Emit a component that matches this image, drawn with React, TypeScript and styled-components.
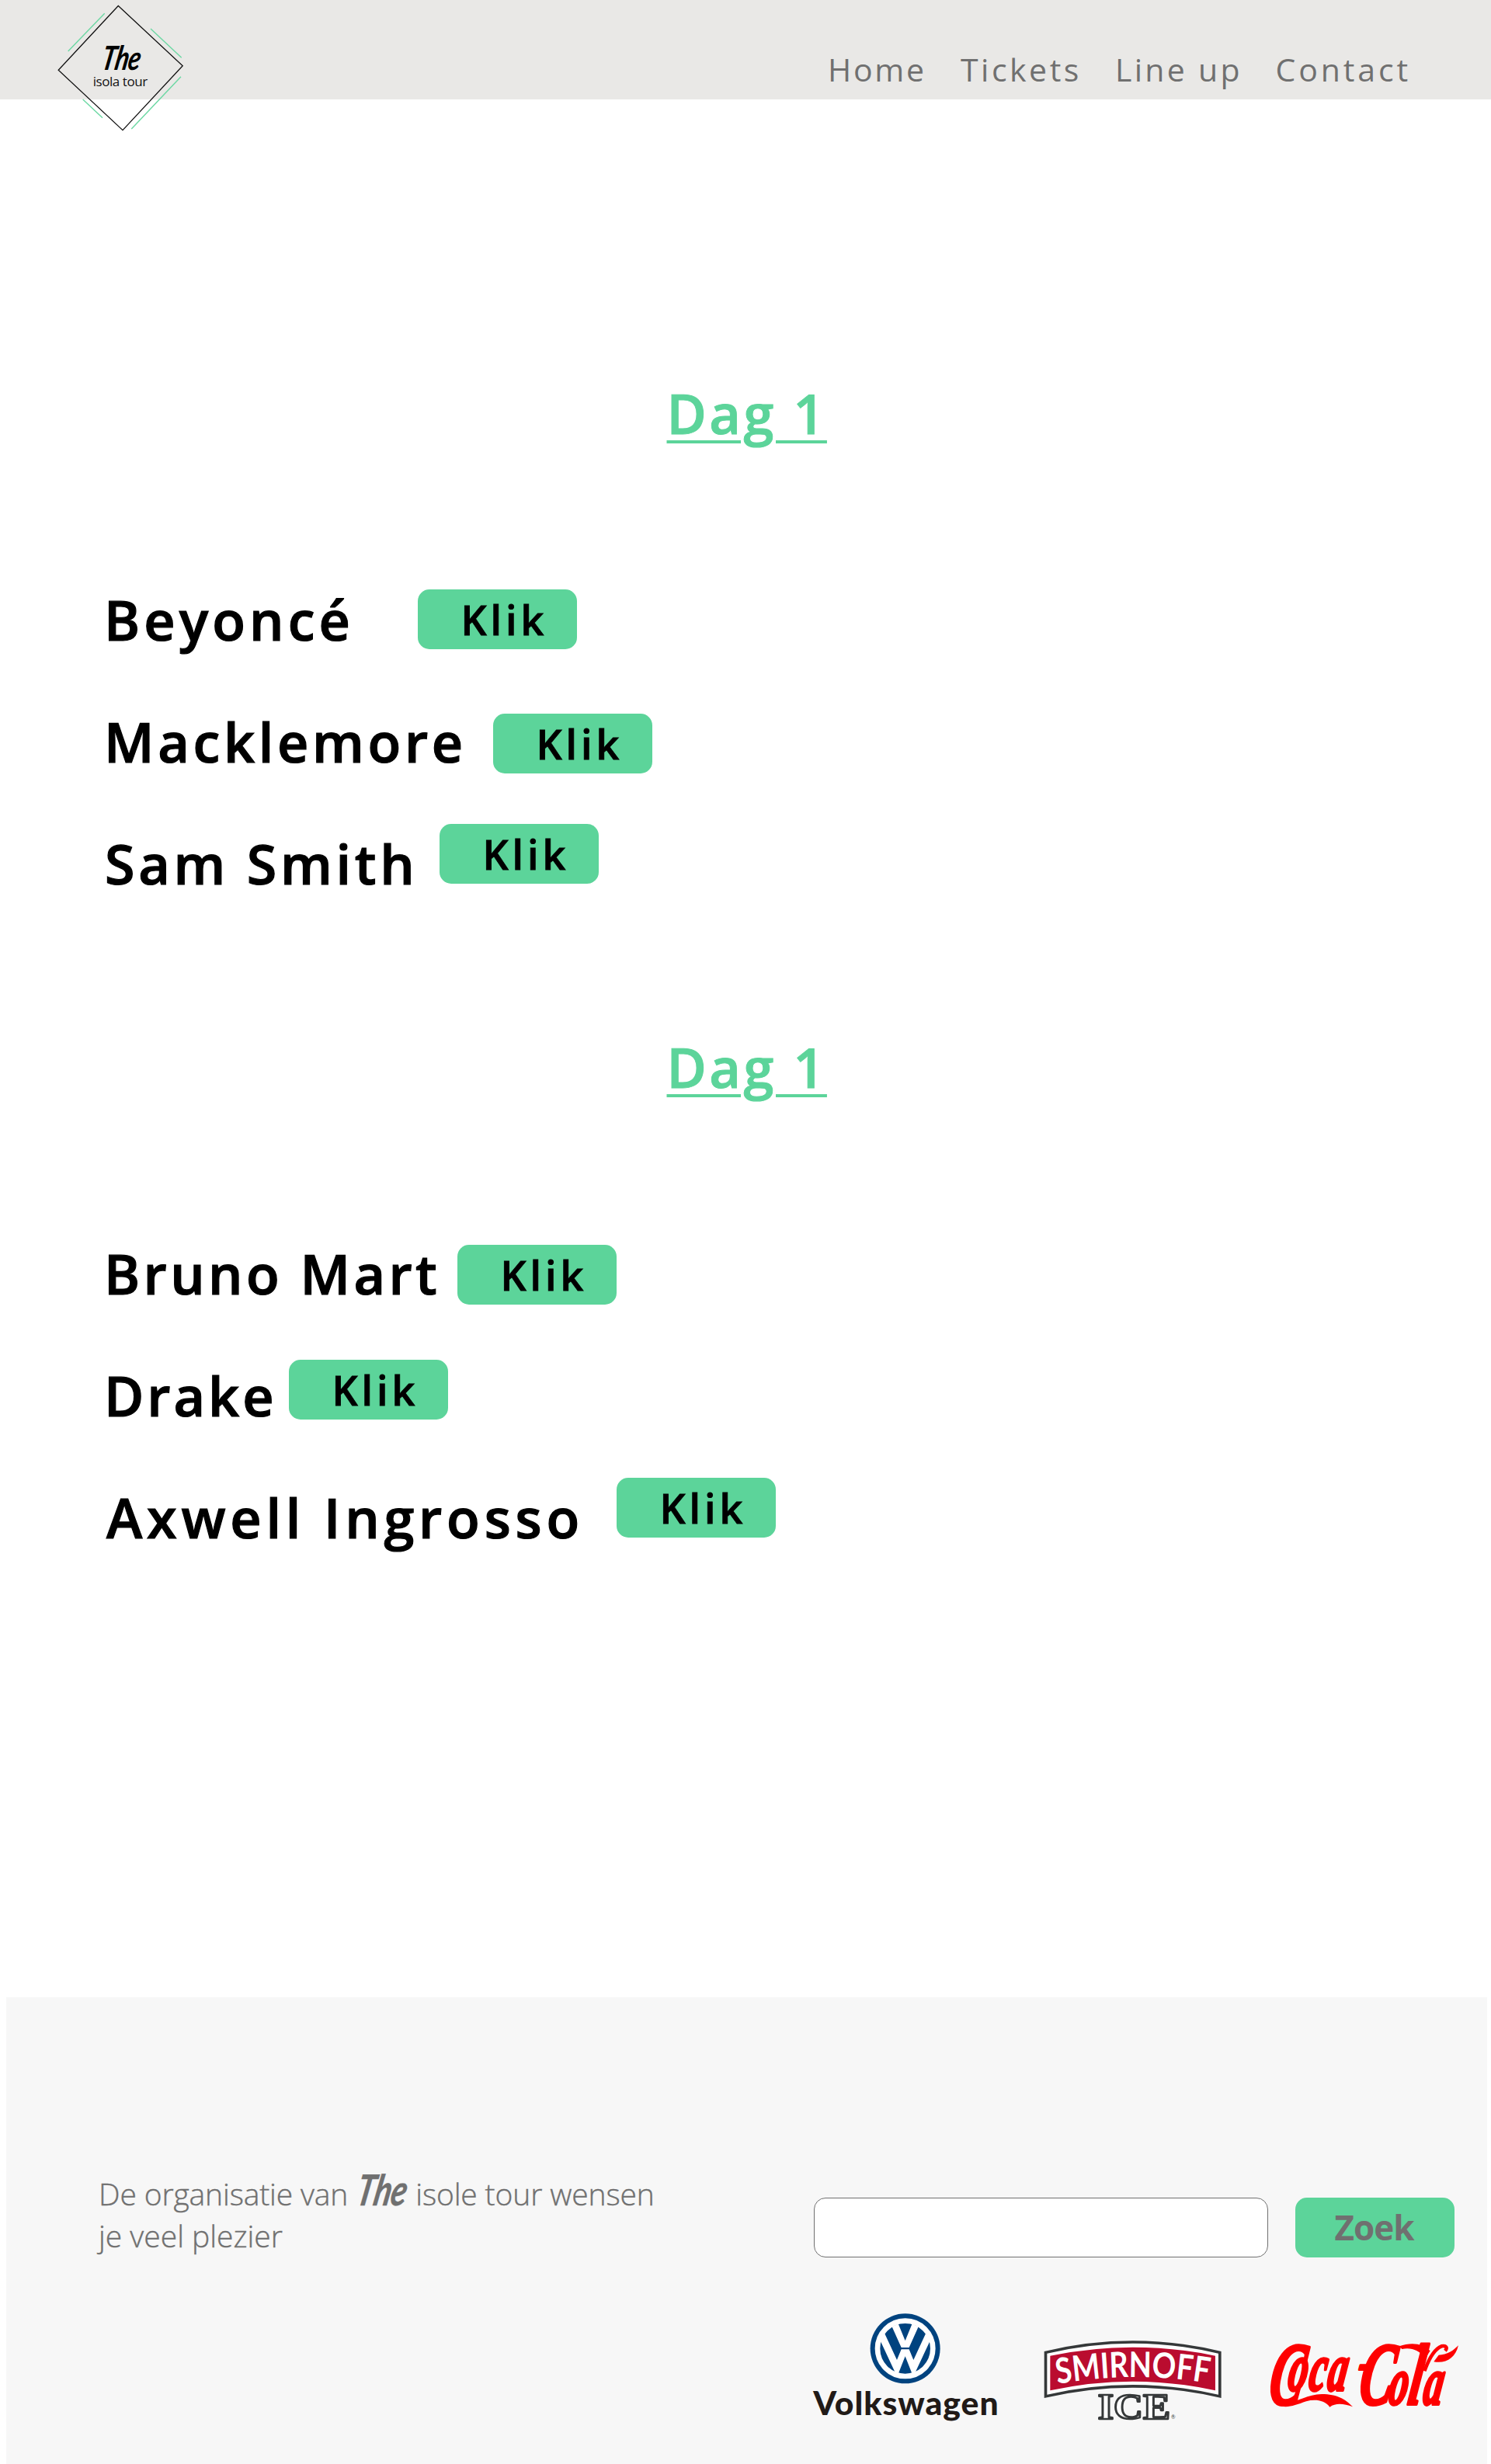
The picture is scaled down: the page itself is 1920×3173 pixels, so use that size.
import React from 'react';
import styled, { createGlobalStyle } from 'styled-components';

const green = '#5cd49a';
const grey = '#707070';

const GlobalStyle = createGlobalStyle`
  * { box-sizing: border-box; }
  body {
    margin: 0;
    background: #fff;
    font-family: 'Open Sans', 'Noto Sans', sans-serif;
  }
`;

const Page = styled.div`
  display: flex;
  flex-direction: column;
  width: 1920px;
  height: 3173px;
  overflow: hidden;
`;

const Header = styled.header`
  display: flex;
  align-items: flex-start;
  flex: none;
  height: 128px;
  background: #e9e8e6;
`;

const LogoSvg = styled.svg`
  flex: none;
  width: 180px;
  height: 180px;
  margin-left: 70px;
  overflow: visible;
`;

const Nav = styled.nav`
  display: grid;
  grid-template-columns: 171px 199px 206.5px 180px;
  margin: 61px 0 0 816px;
`;

const NavLink = styled.a<{ $spacing: number }>`
  color: ${grey};
  font-size: 41px;
  line-height: 56px;
  letter-spacing: ${p => p.$spacing}px;
  white-space: nowrap;
`;

const Main = styled.main`
  flex: none;
  height: 2444px;
  padding-top: 356px;
`;

const Day = styled.section`
  height: 842px;
`;

const DayTitle = styled.h1`
  width: 203px;
  height: 108px;
  margin: 0 auto 158px;
  color: ${green};
  font-size: 70px;
  font-weight: 600;
  line-height: 96px;
  letter-spacing: 3.5px;
  white-space: nowrap;
  text-decoration: underline;
  text-decoration-thickness: 4px;
  text-underline-offset: 8px;
  -webkit-text-stroke: 1px ${green};
`;

const ArtistRow = styled.div`
  display: flex;
  align-items: flex-start;
  height: 157px;
  padding-left: 134px;
`;

const ArtistName = styled.h2<{ $width: number; $spacing: number; $indent: number }>`
  flex: none;
  width: ${p => p.$width}px;
  margin: 0;
  padding-left: ${p => p.$indent}px;
  color: #000;
  font-size: 70px;
  font-weight: 600;
  line-height: 96px;
  letter-spacing: ${p => p.$spacing}px;
  white-space: nowrap;
  -webkit-text-stroke: 1.2px #000;
`;

const Button = styled.button`
  display: block;
  flex: none;
  width: 205px;
  height: 77px;
  padding: 0;
  border: 0;
  border-radius: 15px;
  background: ${green};
  font-family: inherit;
  font-weight: 600;
  text-align: left;
  white-space: nowrap;
`;

const KlikButton = styled(Button)<{ $drop: number }>`
  margin-top: ${p => p.$drop}px;
  padding: 0 0 0 55.5px;
  color: #000;
  font-size: 52px;
  line-height: 77px;
  letter-spacing: 4.9px;
  -webkit-text-stroke: 0.9px #000;
`;

const Footer = styled.footer`
  display: grid;
  grid-template-columns: 1040px 1fr;
  flex: none;
  width: 1907px;
  height: 601px;
  margin-left: 8px;
  background: #f7f7f7;
`;

const Wish = styled.p`
  margin: 0;
  padding: 226px 0 0 119px;
  color: ${grey};
  font-size: 39px;
  font-weight: 300;
  line-height: 54px;
  white-space: nowrap;
  -webkit-text-stroke: 0.4px ${grey};
`;

const WishLine = styled.span<{ $spacing: number }>`
  display: block;
  height: 54px;
  letter-spacing: ${p => p.$spacing}px;
`;

const Script = styled.span`
  display: inline-block;
  width: 87px;
  padding-left: 9px;
  font-family: Lato, sans-serif;
  font-size: 55px;
  font-style: italic;
  font-weight: 700;
  line-height: 40px;
  letter-spacing: -1px;
  transform: skewX(-11deg) scaleX(0.76);
  transform-origin: 9px 40px;
`;

const FooterAside = styled.div`
  display: flex;
  flex-direction: column;
  padding-top: 258px;
`;

const SearchForm = styled.form`
  display: flex;
  gap: 35px;
`;

const SearchInput = styled.input`
  width: 585px;
  height: 77px;
  padding: 0 20px;
  border: 1px solid ${grey};
  border-radius: 15px;
  background: #fff;
  font: 400 36px 'Open Sans', sans-serif;
`;

const SearchButton = styled(Button)`
  padding-left: 50.5px;
  color: ${grey};
  font-size: 44px;
  font-weight: 700;
  line-height: 75px;
  letter-spacing: -1px;
`;

const Sponsors = styled.div`
  display: flex;
  align-items: flex-start;
  padding-top: 70px;
  margin-left: -3px;
`;

const SponsorLogo = styled.svg<{ $w: number; $h: number; $left?: number; $top?: number }>`
  flex: none;
  width: ${p => p.$w}px;
  height: ${p => p.$h}px;
  margin: ${p => p.$top || 0}px 0 0 ${p => p.$left || 0}px;
  overflow: visible;
`;

function TourLogo() {
  return (
    <LogoSvg viewBox="70 0 180 180" fill="none">
      <path d="M152.3 7.5 235.2 84.8 158 167.6 75.2 90.2Z" stroke="#111" strokeWidth="1.3" />
      <path
        d="M134.7 17.3 87.7 66M194 37l39.7 37.3M233 98.7 169.3 166M106.7 128 132 151.7"
        stroke="#6bd8a3"
        strokeWidth="1.4"
      />
      <text
        transform="translate(129 89.5) skewX(-11) scale(.76 1)"
        fontFamily="Lato"
        fontSize="43"
        fontWeight="700"
        fontStyle="italic"
        letterSpacing="-1"
        fill="#000"
      >
        The
      </text>
      <text x="119.7" y="111" fontFamily="Open Sans" fontSize="17" textLength="70.5" fill="#111">
        isola tour
      </text>
    </LogoSvg>
  );
}

function Volkswagen() {
  return (
    <SponsorLogo $w={243.3} $h={145} viewBox="45 50 730 435">
      <circle cx="407" cy="192" r="135" fill="#00437f" />
      <circle cx="407" cy="192" r="107" fill="none" stroke="#fff" strokeWidth="20" />
      <path d="M356 108 392 188H422L458 108 434 96 407 162 380 96Z" fill="#fff" />
      <path
        d="M308 156 368 284 380 290 407 222 434 290 446 284 506 156 488 130 439 236 422 195H392L375 236 326 130Z"
        fill="#fff"
      />
      <text x="52" y="450" fontFamily="Lato" fontWeight="900" fontSize="128" textLength="715" fill="#211a17">
        Volkswagen
      </text>
    </SponsorLogo>
  );
}

function Smirnoff() {
  return (
    <SponsorLogo $w={233.3} $h={108.3} $left={55} $top={35} viewBox="70 65 700 325">
      <path d="M75 113Q417 31 759 113V293Q417 213 75 293Z" fill="#353839" />
      <path d="M86 121Q417 43 748 121V280Q417 204 86 280Z" fill="#fff" />
      <path d="M98 130Q417 64 736 130V264Q417 194 98 264Z" fill="#ba0c2f" />
      <path id="smirnoff-arc" d="M126 239Q417 187 712 236" fill="none" />
      <text fontFamily="Lato" fontWeight="700" fontSize="136" fill="#fff">
        <textPath href="#smirnoff-arc" textLength="586" lengthAdjust="spacingAndGlyphs">
          SMIRNOFF
        </textPath>
      </text>
      <text
        x="282"
        y="375"
        fontFamily="Liberation Serif"
        fontWeight="700"
        fontSize="142"
        textLength="280"
        lengthAdjust="spacingAndGlyphs"
        fill="#fff"
        stroke="#353839"
        strokeWidth="8"
        strokeLinejoin="round"
      >
        ICE
      </text>
      <text x="565" y="375" fontFamily="Lato" fontSize="20" fill="#353839">
        ®
      </text>
    </SponsorLogo>
  );
}

function CocaCola() {
  return (
    <SponsorLogo $w={250} $h={88.3} $left={55} $top={38} viewBox="65 75 750 265" fill="#fe0000">
      <text
        transform="translate(51 0) skewX(-9) scale(.57 1)"
        fontFamily="Liberation Serif"
        fontStyle="italic"
        fontWeight="700"
        stroke="#fe0000"
        strokeWidth="12"
        strokeLinejoin="round"
      >
        <tspan x="108" y="318" fontSize="344">C</tspan>
        <tspan x="226" y="263" fontSize="260" letterSpacing="12">oca</tspan>
        <tspan x="694" y="216" fontSize="170">-</tspan>
        <tspan x="718" y="318" fontSize="344">C</tspan>
        <tspan x="922" y="319" fontSize="260">o</tspan>
        <tspan x="1056" y="319" fontSize="335">l</tspan>
        <tspan x="1160" y="319" fontSize="260">a</tspan>
      </text>
      {/* tail ribbon under the first word */}
      <path d="M112 300C160 330 205 280 275 279C335 279 365 298 395 328C360 316 330 312 306 329C285 302 250 298 215 307C170 323 140 335 105 322Z" />
      {/* ribbon running from the second capital towards the l */}
      <path d="M575 94C620 78 665 82 694 112L676 140C650 108 620 98 585 105Z" />
      {/* loop and pennant at the top right */}
      <path
        d="M672 190C690 140 712 104 738 94C756 90 762 100 752 112"
        fill="none"
        stroke="#fe0000"
        strokeWidth="14"
      />
      <path d="M727 128C760 128 785 110 803 91C792 140 755 162 708 154Z" />
    </SponsorLogo>
  );
}

type Artist = { name: string; width: number; spacing: number; drop: number; indent?: number };

const days: { title: string; artists: Artist[] }[] = [
  {
    title: 'Dag 1',
    artists: [
      { name: 'Beyoncé', width: 404, spacing: 5.1, drop: 9 },
      { name: 'Macklemore', width: 501, spacing: 4.7, drop: 12 },
      { name: 'Sam Smith', width: 432, spacing: 4.7, drop: -3, indent: 1 },
    ],
  },
  {
    title: 'Dag 1',
    artists: [
      { name: 'Bruno Mart', width: 455, spacing: 4.4, drop: 11 },
      { name: 'Drake', width: 238, spacing: 4, drop: 2 },
      { name: 'Axwell Ingrosso', width: 660, spacing: 5.8, drop: -3, indent: 3 },
    ],
  },
];

const links = [
  { label: 'Home', spacing: 2.7 },
  { label: 'Tickets', spacing: 3.5 },
  { label: 'Line up', spacing: 3.3 },
  { label: 'Contact', spacing: 3.9 },
];

export default function App() {
  return (
    <>
      <GlobalStyle />
      <Page>
        <Header>
          <TourLogo />
          <Nav>
            {links.map(l => (
              <NavLink key={l.label} $spacing={l.spacing}>{l.label}</NavLink>
            ))}
          </Nav>
        </Header>
        <Main>
          {days.map((day, i) => (
            <Day key={i}>
              <DayTitle>{day.title}</DayTitle>
              {day.artists.map(a => (
                <ArtistRow key={a.name}>
                  <ArtistName $width={a.width} $spacing={a.spacing} $indent={a.indent || 0}>{a.name}</ArtistName>
                  <KlikButton $drop={a.drop}>Klik</KlikButton>
                </ArtistRow>
              ))}
            </Day>
          ))}
        </Main>
        <Footer>
          <Wish>
            <WishLine $spacing={-0.14}>
              De organisatie van<Script>The</Script>isole tour wensen
            </WishLine>
            <WishLine $spacing={0}>je veel plezier</WishLine>
          </Wish>
          <FooterAside>
            <SearchForm>
              <SearchInput aria-label="Zoek" />
              <SearchButton type="button">Zoek</SearchButton>
            </SearchForm>
            <Sponsors>
              <Volkswagen />
              <Smirnoff />
              <CocaCola />
            </Sponsors>
          </FooterAside>
        </Footer>
      </Page>
    </>
  );
}
